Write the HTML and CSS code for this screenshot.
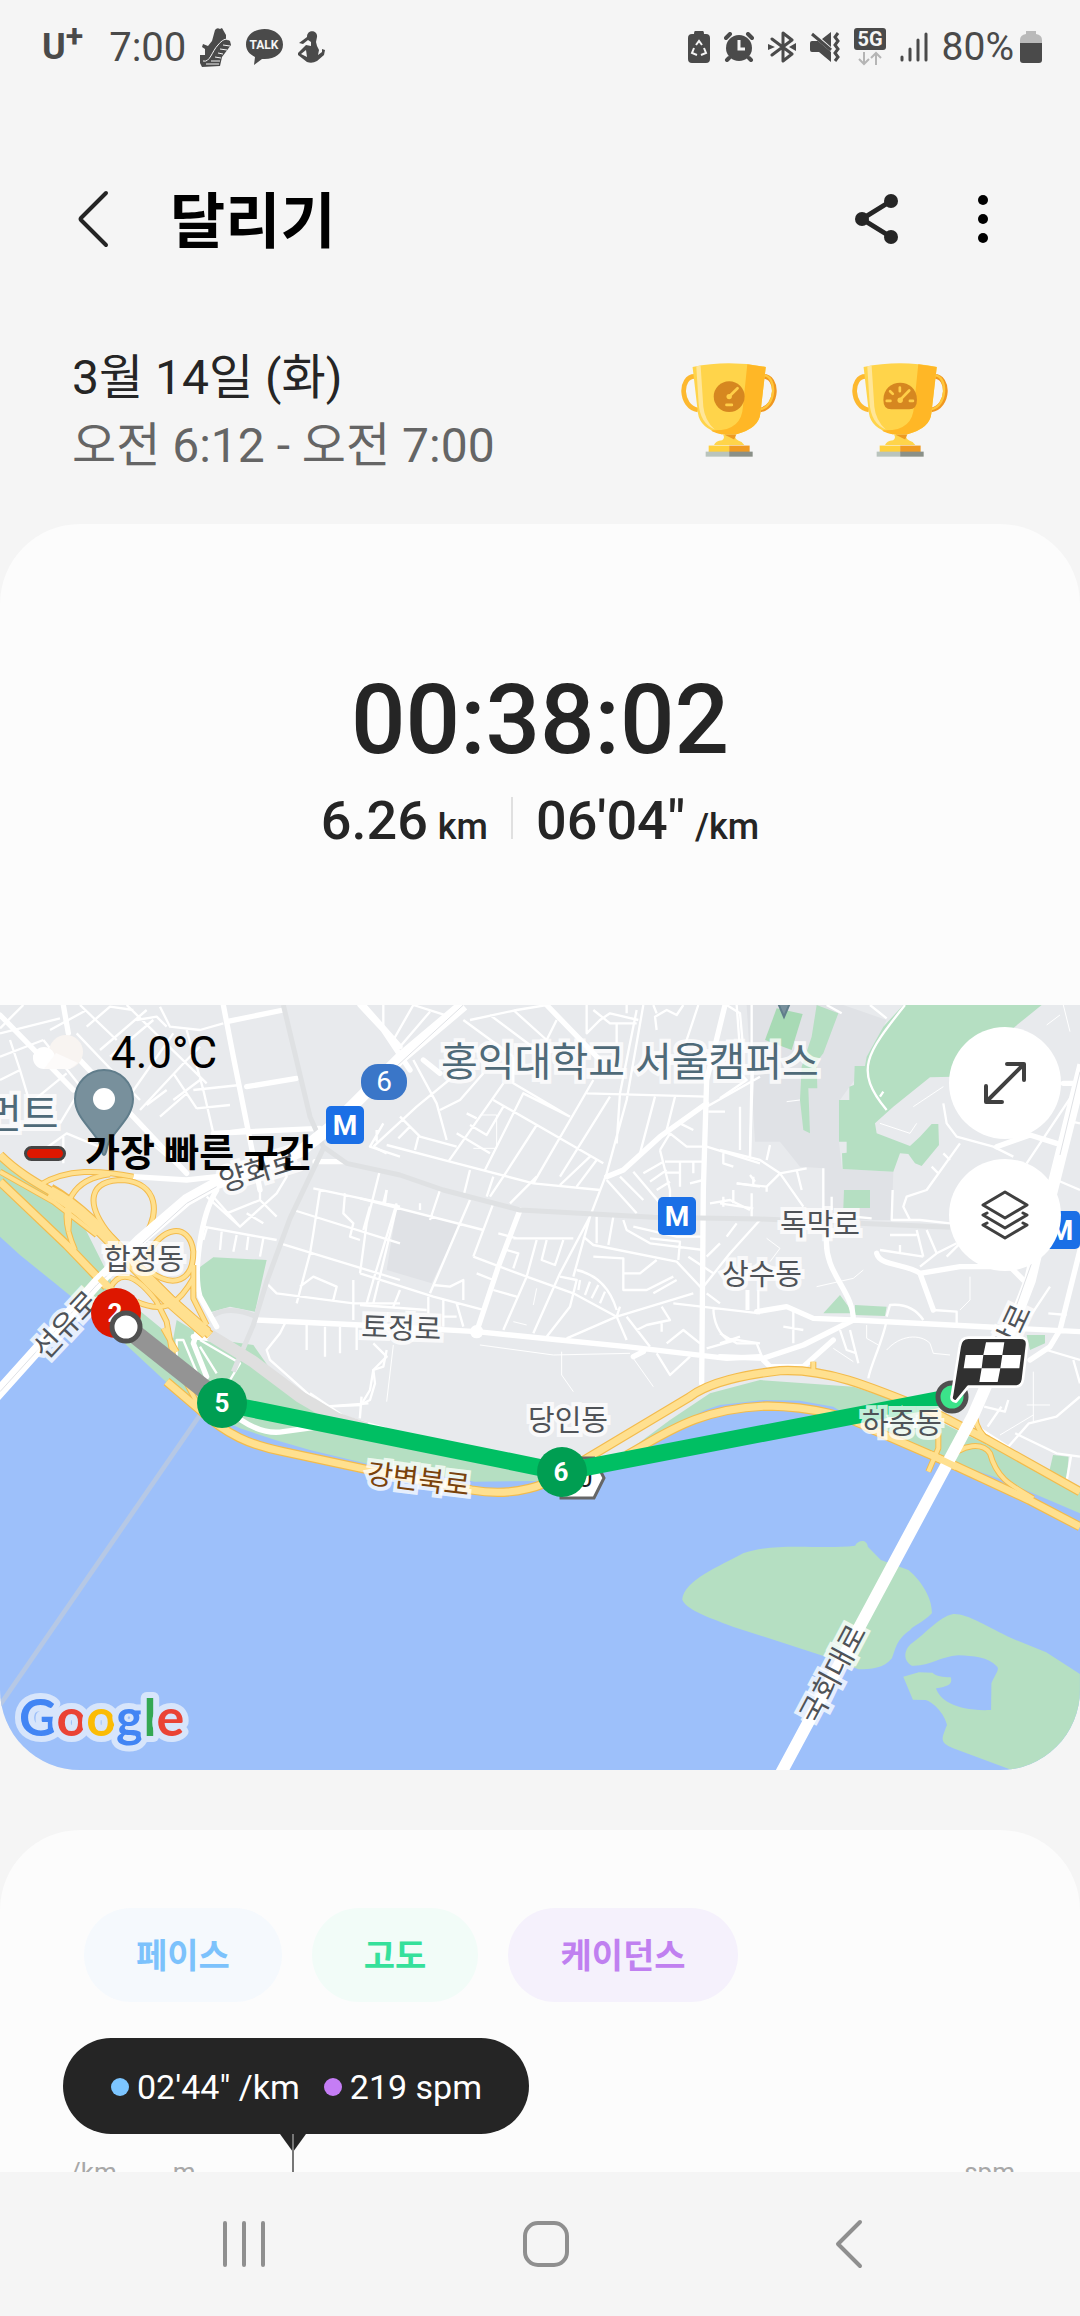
FILE: index.html
```html
<!DOCTYPE html>
<html lang="ko">

<head>
    <meta charset="utf-8">
    <meta name="viewport" content="width=device-width, initial-scale=1">
    <title>달리기</title>
    <link rel="stylesheet" href="styles.css">
</head>
<body>
    <div class="status-bar">
        <div class="status-left">
            <span class="carrier">U<sup>+</sup></span>
            <span class="clock">7:00</span>
            <svg width="32" height="40" viewBox="0 0 32 40">
                <path fill="#4a4a4a" d="M15 3 Q17 0 20 2 L22 1 L26 8 L26 12 L30 14 L31 18 L22 30 L20 39 L2 40 L0 36 L0 28 L5 28 L5 22 L2 20 L3 17 L8 19 L12 14 Z"/>
                <path fill="none" stroke="#f5f5f5" stroke-width="1" d="M3 34 C10 36 12 24 18 18 C22 13 26 11 28 13 M18 26 L23 27 M20 22 L27 23 M23 18 L30 19 M15 30 L21 31 M11 34 L20 34 M6 37 L19 37"/>
            </svg>
            <svg width="37" height="36" viewBox="0 0 37 36">
                <path fill="#4a4a4a" d="M18.500 0 C29 0 37 6.500 37 15.500 C37 25 28 31 16 30 L8 36 L9 28 C3 25 0 21 0 15.500 C0 6.500 8 0 18.500 0 Z"/>
                <text class="talk" x="18" y="20">TALK</text>
            </svg>
            <svg width="28" height="32" viewBox="0 0 28 32">
                <path fill="#4a4a4a" d="M10 6 C10 -2 21 -1 20 6 L19 11 L20 15 L22 19 L21 24 L25 21 L25 18 L28 19 L27 24 L20 30 Q15 33 10 31 L1 24 L1 22 L9 14 L14 15 L14 11 L11 9 L6 13 L2 12 L6 9 Z"/>
                <path fill="#f5f5f5" d="M4 23 L9 19 L10 26 Z"/>
            </svg>
        </div>
        <div class="status-right">
            <svg width="22" height="32" viewBox="0 0 22 32">
                <path fill="#4a4a4a" d="M7 0 H15 Q16 0 16 3 H18 Q22 3 22 7 V28 Q22 32 18 32 H4 Q0 32 0 28 V7 Q0 3 4 3 H6 Q6 0 7 0 Z"/>
                <path fill="none" stroke="#f5f5f5" stroke-width="2" d="M8 14 L11 10 L14 14 M16 17 L18 22 L13 24 M9 24 L4 22 L6 17"/>
            </svg>
            <svg width="30" height="30" viewBox="0 0 30 30">
                <circle cx="15" cy="16" r="13" fill="#4a4a4a"/>
                <path fill="none" stroke="#4a4a4a" stroke-width="4" stroke-linecap="round" d="M2 6 L6 2 M24 2 L28 6 M5 26 L3 28 M25 26 L27 28"/>
                <path fill="none" stroke="#f5f5f5" stroke-width="3" d="M15 8 V17 H21"/>
            </svg>
            <svg width="28" height="32" viewBox="0 0 28 32">
                <path fill="none" stroke="#4a4a4a" stroke-width="3" stroke-linejoin="round" stroke-linecap="round" d="M4 8 L24 23 L15 30 V2 L24 9 L4 24"/>
                <path fill="#4a4a4a" d="M0 13 L7 16 L0 19 Z M28 12 L21 16 L28 20 Z"/>
            </svg>
            <svg width="30" height="30" viewBox="0 0 30 30">
                <path fill="#4a4a4a" d="M2 9 H8 L21 20 V30 L9 20 H2 Q0 20 0 18 V11 Q0 9 2 9 Z M12 7 L21 0 V15 Z"/>
                <path fill="none" stroke="#4a4a4a" stroke-width="3" d="M2 2 L21 18 M28 1 L25 5 L28 9 L25 13 L28 17 L25 21 L28 25 L25 29"/>
            </svg>
            <svg width="32" height="38" viewBox="0 0 32 38">
                <rect width="32" height="22" rx="3" fill="#4a4a4a"/>
                <text class="net" x="16" y="18">5G</text>
                <path fill="none" stroke="#b5b5b5" stroke-width="2" d="M10 24 V36 M5 31 L10 36 L15 31 M22 37 V25 M17 30 L22 25 L27 30"/>
            </svg>
            <svg width="28" height="30" viewBox="0 0 28 30">
                <path fill="none" stroke="#4a4a4a" stroke-width="3" stroke-linecap="round" d="M2 25 V28 M10 17 V28 M18 8 V28 M26 2 V28"/>
            </svg>
            <span class="battery">80%
                <svg width="22" height="32" viewBox="0 0 22 32">
                    <path fill="#bababa" d="M6 0 H16 V3 Q22 4 22 9 V14 H0 V9 Q0 4 6 3 Z"/>
                    <path fill="#4a4a4a" d="M0 12 H22 V29 Q22 32 19 32 H3 Q0 32 0 29 Z"/>
                </svg>
            </span>
        </div>
    </div>

    <header class="app-bar">
        <button type="button" class="icon-btn" aria-label="뒤로">
            <svg width="34" height="60" viewBox="0 0 34 60">
                <path fill="none" stroke="#252525" stroke-width="4" stroke-linecap="round" stroke-linejoin="round" d="M30 4 L5 29 Q4 30 5 31 L30 56"/>
            </svg>
        </button>
        <h1>달리기</h1>
        <button type="button" class="icon-btn" aria-label="공유">
            <svg width="44" height="52" viewBox="0 0 44 52">
                <path fill="none" stroke="#252525" stroke-width="5" d="M37 8 L8 26 L37 44"/>
                <g fill="#252525"><circle cx="37" cy="8" r="7"/><circle cx="8" cy="26" r="7"/><circle cx="37" cy="44" r="7"/></g>
            </svg>
        </button>
        <button type="button" class="icon-btn" aria-label="더보기">
            <svg width="10" height="48" viewBox="0 0 10 48">
                <circle cx="5" cy="5" r="5"/><circle cx="5" cy="24" r="5"/><circle cx="5" cy="43" r="5"/>
            </svg>
        </button>
    </header>

    <main>
        <section class="when">
            <div>
                <p class="date">3월 14일 (화)</p>
                <p class="time-range">오전 6:12 - 오전 7:00</p>
            </div>
            <div class="trophies">
                <svg width="96" height="94" viewBox="0 0 285 280">
                    <defs>
                        <g id="cup">
                            <path fill="none" stroke="#fdb82f" stroke-width="14" d="M40 40 C-5 40 -5 130 50 140"/>
                            <path fill="none" stroke="#f0971f" stroke-width="14" d="M245 40 C290 40 290 130 235 140"/>
                            <path fill="none" stroke="#ffc63a" stroke-width="7" d="M245 37 C286 37 284 130 235 138"/>
                            <path fill="#ffd44a" d="M34 12 Q142 -10 252 12 L236 150 Q232 195 165 212 L120 212 Q56 195 50 150 Z"/>
                            <path fill="#ffb726" d="M197 4 L252 12 L236 150 Q232 195 165 212 L120 212 Q90 205 90 200 Q180 205 184 130 Z"/>
                            <path fill="#ffe698" d="M45 10 L58 8 L66 130 Q70 170 100 198 Q56 180 52 120 Z"/>
                            <path fill="#ffd44a" d="M124 212 H162 Q156 228 180 235 L188 244 H98 Q102 232 122 230 Q132 222 124 212 Z"/>
                            <path fill="#ee9a20" d="M128 213 H164 L158 228 Z"/>
                            <rect x="82" y="246" width="61" height="20" fill="#ffd03c"/>
                            <rect x="143" y="246" width="61" height="20" fill="#ef9a22"/>
                            <rect x="73" y="264" width="70" height="15" fill="#b9c4bd"/>
                            <rect x="143" y="264" width="70" height="15" fill="#8a9088"/>
                        </g>
                    </defs>
                    <use href="#cup"/>
                    <circle cx="143" cy="100" r="46" fill="#d68720"/>
                    <path fill="none" stroke="#ffce48" stroke-width="8" stroke-linecap="round" d="M143 100 L168 75 M135 125 H151"/>
                    <circle cx="143" cy="100" r="8" fill="#ffce48"/>
                </svg>
                <svg width="96" height="94" viewBox="0 0 285 280">
                    <use href="#cup"/>
                    <path fill="#d68720" d="M93 110 C93 42 193 42 193 110 Q193 138 170 138 H116 Q93 138 93 110 Z"/>
                    <path fill="none" stroke="#ffce48" stroke-width="8" stroke-linecap="round" d="M143 110 L170 82 M103 113 H114 M172 113 H181 M142 73 V84 M113 84 L121 92"/>
                    <circle cx="143" cy="111" r="8" fill="#ffce48"/>
                </svg>
            </div>
        </section>

        <section class="card result">
            <div class="numbers">
                <p class="duration">00:38:02</p>
                <div class="totals">
                    <p>6.26<small>km</small></p>
                    <p>06'04"<small>/km</small></p>
                </div>
            </div>

            <div class="map">
                <svg class="map-canvas" viewBox="0 0 1080 765">
                    <!-- ground is drawn on a 3x grid -->
                    <g transform="scale(.33333)">
                        <rect width="3240" height="2295" fill="#e8eaed"/>
                        <path fill="#e0e2e6" d="M2240 0 H2530 L2660 45 2600 175 2520 285 2517 410 2526 492 2680 500 2675 645 2475 645 2470 490 2400 485 2340 410 2265 410 Z M1190 610 L1380 655 1295 835 1160 795 Z"/>
                        <g class="park">
                            <path d="M0 465 L220 600 350 860 520 1000 530 945 620 1000 760 1020 830 1120 960 1210 1115 1260 1620 1370 1720 1440 600 1440 0 800 Z"/>
                            <path d="M1800 1400 L2010 1245 2130 1165 2280 1125 2560 1145 2700 1190 2900 1290 3240 1450 V1600 Z"/>
                            <path d="M595 790 L640 757 800 765 765 920 690 905 620 925 588 860 Z"/>
                            <path d="M2710 0 H3125 L3045 65 2860 215 2790 217 2680 305 2625 355 2630 385 2730 423 2760 395 2795 357 H2815 L2817 420 2765 483 2745 475 2725 447 2700 445 2680 500 2528 492 2526 445 2540 443 V410 H2517 V285 H2548 V245 L2562 240 2564 183 H2595 L2600 155 2650 65 Z"/>
                            <path d="M2532 555 H2610 V609 H2530 Z M2450 0 L2515 25 2470 145 2450 170 2452 250 H2425 L2430 385 2410 375 2400 285 2405 185 2435 95 Z M2470 925 L2520 870 2560 925 Z M2565 900 L2660 905 2655 933 2565 930 Z M3080 990 H3135 V1015 L3090 1035 Z"/>
                            <path fill="#a8dab5" d="M2330 10 L2408 27 2375 135 2295 105 Z"/>
                        </g>
                        <path class="water" d="M0 695 L60 750 165 835 300 945 395 1035 530 1160 600 1215 720 1270 826 1305 930 1335 1095 1375 1425 1430 1620 1428 1700 1410 1878 1345 1980 1285 2115 1215 2160 1200 2290 1185 2400 1187 2500 1205 2581 1255 2839 1365 2994 1420 3240 1525 V2295 H0 Z"/>
                        <g class="park" transform="translate(1620 1185) scale(1.033 1)">
                            <path d="M413 598 C420 540 520 500 590 460 C680 425 820 450 915 437 C925 418 950 418 952 440 L990 480 L1070 510 C1100 535 1140 590 1138 640 C1110 670 1080 680 1075 690 C1035 720 1035 740 1022 775 C1000 805 960 808 925 808 L830 770 L560 680 C480 650 420 625 413 598 Z"/>
                            <path d="M1200 642 C1240 640 1300 680 1370 715 L1470 757 L1568 822 V1110 H1370 L1200 1045 C1160 1025 1165 1020 1182 975 C1175 940 1140 905 1120 900 L1083 899 L1055 830 L1100 817 L1140 818 C1150 830 1170 830 1193 832 C1198 850 1190 858 1150 865 C1160 900 1210 935 1310 930 L1311 850 C1320 825 1335 810 1328 800 C1300 770 1260 768 1215 766 C1160 770 1130 800 1080 797 C1050 780 1060 745 1080 730 C1120 700 1160 650 1200 642 Z"/>
                            <path d="M1490 165 L1535 170 L1530 238 L1480 210 Z"/>
                        </g>
                        <path fill="none" stroke="#b6c8e5" stroke-width="14" d="M600 1230 L0 2100"/>

                        <!-- side streets -->
                        <g class="street">
                            <path transform="translate(0 -45)" d="M0 130 L180 85 M70 45 L0 115 M0 200 L130 150 M230 130 L420 330 M240 45 L350 150 M380 45 L620 280 M260 110 L330 50 L400 60 M150 120 L260 60 M0 270 L60 240 L30 150 M60 240 L90 340 M200 250 L90 340 M130 150 L250 300 M180 400 L240 300 M100 200 L150 180 M190 440 V520 M130 480 L200 430 L320 480 M560 120 L610 300 L640 430 M420 360 L560 210 L600 170 M440 345 L500 300 M480 380 L560 310 M520 330 L600 270 M380 330 L520 130 M590 355 L690 345 M580 300 L720 285 M640 430 L750 415 M480 50 L510 110 L600 120 L670 100 M410 90 L470 80 L500 110 M300 180 L440 60 M330 200 L460 90 M520 250 L590 355 M430 440 L560 550 M620 620 L720 710 L830 610 L860 560 L850 530 M720 710 L640 620 M610 710 L830 750 M680 670 L780 630 L830 680 M740 670 L790 700 M620 715 L610 750 M665 725 L660 780 M710 735 L700 785 M745 740 L740 780 M790 745 L780 800 M780 600 V630 M840 760 L1200 870 M880 660 L1200 760 M960 600 L940 730 L930 790 L890 940 M940 595 L1200 650 M1035 610 L1030 670 L1060 700 L1050 740 L1080 750 M1190 640 L1120 870 L1100 940 M1110 650 L1090 720 M1160 600 L1150 640 M1150 400 L1110 470 L1200 500 M1130 455 V420 M800 880 L830 910 L1060 940 H1200 M900 890 L940 860 L1010 890 L1000 930 M1060 870 V990 M920 990 V1080 M860 990 L840 1030 L800 1080 L810 1110 L900 1190 L1000 1280 M975 1010 V1100 M1020 1010 V1090 M1070 1010 V1080 M1160 1080 L1150 1130 L1120 1140 L1125 1180 L1110 1230 L1080 1245 L980 1250 M530 1100 V1050 L550 1050 L600 1170 M600 1070 L650 1150 M600 1050 L720 1120 L690 1170"/>
                            <path transform="translate(1080 -45)" d="M160 210 L230 340 L260 450 M70 45 V120 M100 150 L160 45 M210 65 L120 170 M160 45 L270 80 M240 360 L300 330 L370 250 M330 90 L470 60 L560 45 M390 75 L530 180 M460 60 L560 150 L590 90 M310 90 L460 200 M40 470 L170 350 L340 210 M40 470 L80 490 M120 380 L180 440 L290 470 M115 445 L150 410 M175 440 L165 480 M80 465 L270 515 L520 580 L720 600 M265 515 L430 280 M400 330 L730 520 M375 540 L490 310 L630 380 M460 200 V280 L630 380 M520 580 L700 270 M450 640 L530 560 M390 620 L430 560 L530 405 M330 405 L380 435 L430 350 M290 430 L390 490 M320 370 L350 385 M600 585 L690 500 M650 590 L710 510 M850 45 L800 330 L740 550 L690 680 L640 860 M830 60 L780 310 L770 460 M680 310 L1040 320 M750 320 L600 560 M885 320 L840 490 M945 320 L920 420 M740 570 L830 670 M780 560 L850 630 M820 545 L900 640 M900 480 L930 600 V640 M850 550 L910 515 M870 575 L920 540 M890 600 L930 575 M915 515 H1030 M920 548 H960 M960 515 V590 M1000 515 V550 M990 580 L1030 570 M930 430 L980 470 L1040 470 L1200 520 M900 480 L930 430 M960 400 L1000 420 M0 625 L370 720 M60 540 L20 700 L0 850 M110 650 L40 940 M240 600 L210 690 M80 600 L75 640 M180 640 V660 M330 630 L300 700 L210 910 M400 640 L340 800 M330 540 L310 620 M400 560 L380 620 M340 800 L500 860 L640 910 L770 980 L780 950 M0 850 L220 920 L370 960 M220 885 L270 890 L310 870 V930 M350 850 L400 870 M400 900 L470 920 M440 780 L475 790 L460 835 M460 745 H640 M560 750 L545 810 L585 825 L610 750 M530 750 L500 860 L430 1020 M690 680 L600 850 L520 1030 M600 860 L650 870 L630 950 L560 1040 M415 730 L470 745 M670 740 L700 765 L950 815 L1030 900 M710 680 V760 M760 680 L745 765 M790 690 L800 720 L870 760 L1030 780 M820 710 L950 740 H1030 M870 745 L960 755 L955 810 M700 800 L790 805 V900 H860 L940 860 M790 850 L840 850 L890 810 M650 840 Q740 860 770 960 M660 870 L655 900 M690 875 L675 915 M715 885 L695 925 M735 905 L720 940 M620 1045 L770 980 L1000 910 M770 980 L800 1050 M800 980 L870 1070 M830 1020 L860 1005 L930 990 L905 950 M905 1000 V1025 M890 1090 L930 1155 L990 1100 M920 1060 L970 1020 L1020 1060 M880 910 L950 870 M1040 910 L1080 940 M940 940 L1200 970 M1030 890 L1110 790 L1200 690 M985 800 L1060 850 M1040 800 L1080 760 M1100 740 L1130 700 M1040 1075 L1130 1050 L1200 1060 M1060 950 Q1060 1020 1110 1055 M0 945 L200 960 M205 920 V970 M250 930 V1010 M290 940 L310 1010 M250 980 H290 M120 900 L100 950 M1140 350 V480 M1180 200 L1170 500 M1045 365 H1095 M680 45 L680 130 L720 90 L750 70 L835 90 M700 60 L750 100 H830 M770 100 V160 M800 45 V70 M890 120 L885 80 L920 60 L950 75 L970 45 M970 180 L1015 45 M880 45 L890 70 M1100 45 L1140 70 L1150 180 M1200 260 L1040 350 M1050 640 L1110 630 L1170 660 M1090 620 V650 M1090 490 V520 L1120 530 M1130 580 L1200 590 M1180 560 V590 M1160 900 V960 M40 1060 L80 1100 L40 1140 L30 1200 L0 1250"/>
                            <path transform="translate(2160 -45)" d="M95 45 V230 L90 500 M50 45 L60 180 M0 480 L120 510 L180 550 L250 650 M150 465 L140 510 M50 580 L140 590 L180 550 L260 535 M230 540 L245 600 M140 590 V605 M90 555 L105 575 M0 640 L100 655 M40 600 V640 M95 610 V680 M310 535 V660 M335 620 V660 M350 675 L455 685 M518 600 L515 690 H600 L690 700 M555 45 C440 190 400 240 500 360 M480 320 L490 305 M720 460 L620 600 L560 620 L550 650 L570 690 M670 340 L680 400 L710 440 L820 470 L880 500 M635 530 L655 550 M670 490 L690 510 M1080 280 L920 520 M450 45 L500 85 M320 45 L365 70 M0 325 L80 270 L60 250 M510 735 H590 M590 720 L610 800 M620 720 L650 790 M600 830 L650 790 L710 760 M480 780 L610 800 M540 765 V790 M85 900 V960 M115 900 V960 M500 990 C490 1050 450 1130 445 1165 M500 980 L510 945 C560 940 590 960 610 990 M640 960 L710 965 V1000 M220 960 V1060 M190 1010 L250 1020 M0 1030 L50 1060 L110 1060 L130 1110 M0 1060 L60 1040 M360 1020 L380 1080 L410 1090 M390 1020 L415 1120 M990 890 L930 980 M985 970 L1040 975 M980 1080 L1080 1110 M1060 1110 L1080 1180 M1080 600 L1010 570 M1080 400 L1055 395 M680 800 L720 760"/>
                            <path transform="translate(1620 1185) scale(1.033 1)" d="M1290 20 L1350 35 L1360 0 M1300 80 L1340 20 M1270 80 L1360 140 L1420 70 L1500 50 L1568 -10 M1380 100 L1500 160 L1568 170 M1542 170 L1530 240"/>
                            <path transform="translate(0 1185) scale(1.033 1)" d="M940 20 L1070 10 M1050 -10 L1045 55 M900 -20 L1000 50 L1120 85"/>
                        </g>
                        <g class="lane">
                            <path d="M1440 1020 L1660 1050 1890 1045 M1685 1040 V1110 L1720 1160 M1900 1060 L1960 1145 M2450 845 L2560 820 2590 795 M2910 815 V885 L2880 915 M2660 1035 C2700 990 2760 985 2790 1015 L2800 1045 2850 1050 M2600 960 V1000 L2635 1020 M2500 1030 L2560 1070 M1440 330 H1490 V430 H1420 M2360 290 L2400 285 M2740 305 L2830 245 M2640 355 L2730 385 2750 355 M3140 60 L3180 30 M3190 0 L3210 80 M3100 1100 V1250 M3080 1200 H3150 M3100 1230 L3000 1290 M2300 700 L2340 730 2310 770 M1610 850 L1600 900 M1540 950 L1580 960 M1180 1020 L1160 1190"/>
                        </g>

                        <!-- main white roads -->
                        <g class="road">
                            <path transform="translate(0 -45)" d="M0 75 L220 300 M190 45 L205 130 M230 200 L560 550 M400 560 L560 570 L650 560 M670 45 L700 200 L740 400 L780 600 M680 95 L850 60 M740 290 L890 265 M640 430 L960 415 M945 515 H1030 M1090 45 L1200 170 M650 600 C600 680 580 850 600 920 L650 1010 M590 1030 L580 1060 L620 1160 M770 990 L1080 1005 L1430 1025 M580 1040 L660 1050 L740 1100"/>
                            <path transform="translate(1080 -45)" d="M0 45 L70 120 L150 240 M190 210 L240 250 M560 45 L720 210 M1095 45 L1040 270 L1030 600 L1025 1180 M480 660 L415 830 L350 1025 M350 1025 L600 1050 L800 1070 L1100 1105 L1200 1100 M820 1100 L850 1085 M1040 340 L900 440 L790 540 L740 560"/>
                            <path transform="translate(2160 -45)" d="M830 470 L930 435 L1010 460 M470 790 C480 830 560 820 600 850 L640 960 M600 850 L720 830 H870 L910 870 M110 965 L200 950 L280 985 L400 990 L1080 1025 M320 740 C310 850 400 900 400 990 M0 1100 L130 1105 L250 1065 L400 990 M130 1110 L150 1130 L250 1130 L340 1050 M1080 780 L1020 1020 L990 1070 L930 1110 M1060 280 L1030 280"/>
                            <path d="M723 1245 Q790 1290 850 1280 L960 1265"/>
                        </g>
                        <circle cx="1430" cy="980" r="20" fill="#fff"/>
                        <g class="tunnel">
                            <path d="M850 0 L930 335 970 425 1040 475 1200 510 1330 555 1560 615 1960 637 2280 642 2850 667"/>
                            <path d="M970 430 L870 640 800 830 760 960 700 1100"/>
                            <path d="M640 930 Q690 900 770 935"/>
                        </g>
                        <path fill="none" stroke="#dfdfdf" stroke-width="36" d="M630 990 L760 1070 900 1175 1010 1240 1100 1270"/>

                        <!-- express way: dark edge first, then the yellow on top of it -->
                        <g class="ramp-edge">
                            <g id="ramps">
                                <path d="M120 540 C200 490 300 495 400 515 M225 735 C160 590 230 520 330 508 M330 690 C250 590 270 525 370 525 C470 535 490 620 420 715 M440 760 C480 660 570 650 580 740 C580 830 520 850 450 800 M330 850 C360 790 410 810 470 890 L500 950 520 1060 600 1210 M410 890 C500 930 540 890 580 820 M580 780 V880 L620 960 M210 600 L205 680 M0 500 L160 590 290 690 M490 970 L530 1040"/>
                                <path d="M2815 1285 V1330 L2785 1400 M2839 1370 C2890 1310 2950 1315 2970 1345 C2990 1420 3030 1440 3100 1480 M2925 1235 Q2930 1280 2970 1310 M2440 1070 V1100"/>
                            </g>
                        </g>
                        <g class="highway-edge">
                            <g id="highways">
                                <path d="M0 450 C80 530 170 560 230 610 C310 670 350 720 410 780 L510 880 630 990"/>
                                <path d="M0 530 L200 720 320 845 M500 1130 L600 1215 C680 1290 750 1320 850 1340 L1085 1390 1415 1455 C1530 1475 1640 1455 1744 1370 L2070 1175 C2130 1130 2230 1110 2340 1097 C2480 1090 2600 1140 2808 1225 L2963 1305 3240 1460"/>
                                <path d="M1880 1350 C1990 1290 2090 1210 2302 1203 C2440 1205 2550 1235 2620 1275 L2839 1370 3087 1485 3240 1565"/>
                            </g>
                            <path stroke-width="40" d="M150 555 C230 600 310 680 400 780 L500 880 620 985"/>
                        </g>
                        <use href="#ramps" class="ramp"/>
                        <use href="#highways" class="highway"/>
                        <path fill="none" stroke="#ffe08f" stroke-width="34" d="M150 560 C230 600 310 680 400 780 L500 880 620 985"/>

                        <!-- bridges -->
                        <g class="bridge">
                            <path d="M-20 1180 L290 835 420 705 560 585 650 535 900 440 1000 360 1200 160 1390 0"/>
                            <path d="M2340 2310 L2920 1230 3040 955 3090 825 3110 740 3200 380 3250 180"/>
                        </g>
                        <path fill="none" stroke="#dfe1e5" stroke-width="3" d="M0 1160 L290 840 560 595 650 545 M1140 230 L1390 0 M3050 900 L3100 760 M3180 450 L3240 200"/>
                        <path fill="none" stroke="#ffe08f" stroke-width="20" d="M2790 1348 L2870 1386 M300 820 L340 860"/>
                    </g>

                    <!-- pins and stations -->
                    <g fill="#78909c" stroke="#607d8b" stroke-width="2">
                        <path d="M104 150 C101 150 102 141 98 135 C88 120 75 110 75 94 A29 29 0 0 1 133 94 C133 110 120 120 110 135 C106 141 107 150 104 150 Z"/>
                        <path d="M778 -2 L784 12 L790 -2 Z"/>
                    </g>
                    <circle cx="104" cy="94" r="11" fill="#fff"/>
                    <rect x="361" y="59" width="46" height="36" rx="17" fill="#3a76c8"/>
                    <text class="line-no" x="384" y="86">6</text>
                    <g class="station">
                        <rect x="326" y="101" width="38" height="38" rx="5"/>
                        <text x="345" y="130">M</text>
                        <rect x="658" y="192" width="38" height="38" rx="5"/>
                        <text x="677" y="221">M</text>
                        <rect x="1042" y="206" width="38" height="38" rx="5"/>
                        <text x="1061" y="235">M</text>
                    </g>

                    <g class="place">
                        <text class="poi" x="-15" y="123">먼트</text>
                        <text class="poi" x="441" y="71">홍익대학교 서울캠퍼스</text>
                        <text transform="translate(223 187) rotate(-17)">양화로</text>
                        <text x="104" y="265">합정동</text>
                        <text transform="translate(46 356) rotate(-47)">선유로</text>
                        <text transform="translate(361 332) rotate(2)">토정로</text>
                        <text x="780" y="230">독막로</text>
                        <text x="722" y="280">상수동</text>
                        <text x="528" y="426">당인동</text>
                    </g>

                    <!-- shield -->
                    <path d="M559 453 H594 L604 473 L594 493 H561 Z" fill="#fff" stroke="#666" stroke-width="3"/>
                    <path d="M559 455 H593 L596 460 H559 Z" fill="#d65f5f"/>
                    <text class="shield" x="578" y="482">0</text>

                    <path d="M126 322 L222 398" stroke="#949494" stroke-width="19"/>
                    <path d="M222 398 L562 467 L952 392" fill="none" stroke="#00bf63" stroke-width="17"/>

                    <g class="place">
                        <text x="862" y="429">하중동</text>
                        <text class="highway-name" transform="translate(366 478) rotate(7)">강변북로</text>
                        <text transform="translate(817 721) rotate(-62)">국회대로</text>
                        <text transform="translate(998 378) rotate(-65)">서강로</text>
                    </g>

                    <g class="marker">
                        <circle cx="116" cy="308" r="25" fill="#dd1700"/>
                        <text x="115" y="317">2</text>
                        <circle cx="222" cy="398" r="25" fill="#009e52"/>
                        <text x="222" y="407">5</text>
                        <circle cx="562" cy="467" r="25" fill="#009e52"/>
                        <text x="561" y="476">6</text>
                    </g>
                    <circle cx="126" cy="322" r="14" fill="#fff" stroke="#505050" stroke-width="5"/>
                    <circle cx="952" cy="392" r="14" fill="#3be38a" stroke="#505050" stroke-width="5"/>
                    <g transform="translate(720 -15) scale(.33333)">
                        <path fill="#303030" stroke="#fff" stroke-width="8" stroke-linejoin="round" d="M745 1043 H900 Q924 1043 921 1066 L909 1168 Q906 1190 884 1190 H745 L708 1235 Q690 1232 696 1215 L719 1070 Q722 1043 745 1043 Z"/>
                        <path fill="#fff" d="M798 1057 H853 L847 1095 H790 Z M737 1095 H790 L785 1135 H731 Z M847 1095 H903 L898 1135 H841 Z M785 1135 H841 L833 1176 H778 Z"/>
                    </g>

                    <text class="google" x="19" y="731"><tspan fill="#4285f4">G</tspan><tspan fill="#ea4335">o</tspan><tspan fill="#fbbc05">o</tspan><tspan fill="#4285f4">g</tspan><tspan fill="#34a853">l</tspan><tspan fill="#ea4335">e</tspan></text>
                </svg>

                <div class="map-info">
                    <p class="weather">
                        <svg width="52" height="36" viewBox="0 0 52 36">
                            <circle cx="34" cy="17" r="17" fill="#f8f4f1"/>
                            <circle cx="12" cy="23" r="11" fill="#fff"/>
                            <path fill="#fdfbfa" d="M12 34 H38 L46 28 L24 18 Z"/>
                        </svg>
                        4.0°C
                    </p>
                    <p class="legend"><i class="pill"></i>가장 빠른 구간</p>
                </div>

                <div class="map-tools">
                    <button type="button" class="round-btn" aria-label="지도 확대">
                        <svg width="46" height="46" viewBox="0 0 46 46">
                            <path fill="none" stroke="#404040" stroke-width="4" stroke-linecap="round" stroke-linejoin="round" d="M5 41 L41 5 M25 4 H42 V20 M4 26 V42 H20"/>
                        </svg>
                    </button>
                    <button type="button" class="round-btn" aria-label="지도 종류">
                        <svg width="50" height="52" viewBox="0 0 50 52">
                            <g fill="none" stroke="#404040" stroke-width="3" stroke-linejoin="round" stroke-linecap="round">
                                <path d="M25 3 L47 16 L25 29 L3 16 Z"/>
                                <path d="M7 24 L3 26 L25 39 L47 26 L43 24"/>
                                <path d="M7 34 L3 36 L25 49 L47 36 L43 34"/>
                            </g>
                        </svg>
                    </button>
                </div>
            </div>
        </section>

        <section class="card chart-card">
            <div class="chips">
                <button type="button" class="chip pace">페이스</button>
                <button type="button" class="chip altitude">고도</button>
                <button type="button" class="chip cadence">케이던스</button>
            </div>
            <div class="chart">
                <div class="tooltip">
                    <span class="dot blue"></span>02'44" /km
                    <span class="dot purple"></span>219 spm
                </div>
                <div class="axis">
                    <span>/km</span>
                    <span>m</span>
                    <span class="axis-right">spm</span>
                </div>
            </div>
        </section>
    </main>

    <nav class="nav-bar">
        <button type="button" aria-label="최근 앱">
            <svg width="42" height="48" viewBox="0 0 42 48">
                <path fill="none" stroke="#8f8f8f" stroke-width="4" stroke-linecap="round" d="M2 3 V45 M21 3 V45 M40 3 V45"/>
            </svg>
        </button>
        <button type="button" aria-label="홈">
            <svg width="48" height="48" viewBox="0 0 48 48">
                <rect x="3" y="3" width="42" height="42" rx="13" fill="none" stroke="#8f8f8f" stroke-width="4"/>
            </svg>
        </button>
        <button type="button" aria-label="뒤로">
            <svg width="28" height="50" viewBox="0 0 28 50">
                <path fill="none" stroke="#8f8f8f" stroke-width="4" stroke-linecap="round" stroke-linejoin="round" d="M25 3 L3 25 L25 47"/>
            </svg>
        </button>
    </nav>
</body>
</html>
```
FILE: styles.css
```css
* 
{
    box-sizing: border-box;
}

body 
{
    margin: 0;
    height: 100vh;
    display: flex;
    flex-direction: column;
    overflow: hidden;
    background-color: #f5f5f5;
    color: #252525;
    font-family: Roboto, 'Noto Sans CJK KR', sans-serif;
}

p, h1 
{
    margin: 0;
}

svg 
{
    display: block;
    flex-shrink: 0;
}

button 
{
    border: none;
    background: none;
    padding: 0;
    font-family: inherit;
    cursor: pointer;
}

/* status bar */
.status-bar 
{
    flex-shrink: 0;
    display: flex;
    justify-content: space-between;
    align-items: center;
    height: 94px;
    padding: 0 38px 0 42px;
    color: #4a4a4a;
    font-size: 40px;
}

.status-left, .status-right 
{
    display: flex;
    align-items: center;
    gap: 14px;
}

.carrier 
{
    display: flex;
    align-items: center;
    font-size: 36px;
    font-weight: 700;
    margin-right: 12px;
}

.carrier sup 
{
    font-size: 32px;
    line-height: 20px;
    align-self: flex-start;
}

.battery 
{
    display: flex;
    align-items: center;
    gap: 6px;
    font-size: 39px;
}

.talk, .net 
{
    fill: #f5f5f5;
    font-weight: 700;
    text-anchor: middle;
}

.talk 
{
    font-size: 12px;
}

.net 
{
    font-size: 20px;
}

/* app bar */
.app-bar 
{
    flex-shrink: 0;
    display: flex;
    align-items: center;
    height: 250px;
    padding: 0 92px 0 76px;
}

.app-bar h1 
{
    flex: 1;
    margin-left: 60px;
    padding-bottom: 6px;
    color: #000;
    font-size: 60px;
    font-weight: 700;
}

.icon-btn + .icon-btn 
{
    margin-left: 80px;
}

main 
{
    flex: 1;
    min-height: 0;
    overflow: hidden;
}

.when 
{
    display: flex;
    justify-content: space-between;
    padding: 0 132px 44px 72px;
    font-size: 48px;
    line-height: 68px;
}

.time-range 
{
    color: #656565;
}

.trophies 
{
    display: flex;
    align-items: center;
    gap: 75px;
    padding-bottom: 4px;
}

.card 
{
    background-color: #fcfcfc;
    border-radius: 80px;
    overflow: hidden;
}

/* result */
.numbers 
{
    display: flex;
    flex-direction: column;
    align-items: center;
    padding: 137px 0 142px;
    font-weight: 500;
}

.duration 
{
    font-size: 96px;
    line-height: 118px;
}

.totals 
{
    display: flex;
    align-items: center;
    font-size: 54px;
    line-height: 84px;
}

.totals p 
{
    display: flex;
    align-items: baseline;
    height: 84px;
}

.totals p + p::before 
{
    content: "";
    width: 2px;
    height: 42px;
    margin: 0 23px;
    background-color: #e0e0e0;
}

.totals small 
{
    margin-left: 10px;
    font-size: 36px;
}

/* map */
.map 
{
    position: relative;
}

.map-canvas 
{
    width: 100%;
    height: auto;
}

.park 
{
    fill: #b5dfc2;
}

.water 
{
    fill: #9dc0fa;
}

.street, .lane, .road, .tunnel, .bridge, .ramp-edge, .ramp, .highway-edge, .highway 
{
    fill: none;
    stroke: #fff;
    stroke-linejoin: round;
}

.street 
{
    stroke-width: 7px;
}

.lane 
{
    stroke-width: 3px;
}

.road 
{
    stroke-width: 16px;
    stroke-linecap: round;
}

.tunnel 
{
    stroke: #dfe1e3;
    stroke-width: 15px;
}

.bridge 
{
    stroke-width: 36px;
}

.ramp-edge, .highway-edge 
{
    stroke: #f3bb4c;
}

.ramp, .highway 
{
    stroke: #ffe08f;
}

.ramp-edge 
{
    stroke-width: 18px;
}

.ramp 
{
    stroke-width: 12px;
}

.highway-edge 
{
    stroke-width: 28px;
}

.highway 
{
    stroke-width: 21px;
}

.place text 
{
    font-size: 29px;
    fill: #4f5358;
    stroke: rgba(255, 255, 255, 0.75);
    stroke-width: 8px;
    paint-order: stroke;
}

.place .poi 
{
    font-size: 40px;
    fill: #4f6a78;
}

.place .highway-name 
{
    font-size: 28px;
    fill: #7a420b;
}

.station 
{
    fill: #1a6fe6;
}

.station text, .line-no 
{
    fill: #fff;
    font-size: 28px;
    text-anchor: middle;
}

.station text, .marker text 
{
    font-weight: 700;
}

.marker text 
{
    fill: #fff;
    font-size: 26px;
    text-anchor: middle;
}

.shield 
{
    font-size: 26px;
    fill: #222;
}

.google 
{
    font-family: Lato, sans-serif;
    font-size: 52px;
    font-weight: 700;
    stroke: #d7e5fb;
    stroke-width: 12px;
    stroke-linejoin: round;
    paint-order: stroke;
}

.map-info 
{
    position: absolute;
    top: 14px;
    left: 24px;
    color: #000;
}

.weather 
{
    display: flex;
    align-items: center;
    gap: 27px;
    padding-left: 8px;
    font-size: 44px;
    line-height: 68px;
}

.legend 
{
    display: flex;
    align-items: center;
    gap: 19px;
    margin-top: 36px;
    font-size: 38px;
    font-weight: 700;
    line-height: 60px;
}

.pill 
{
    width: 42px;
    height: 15px;
    border: 3px solid #444;
    border-radius: 8px;
    background-color: #dd1700;
}

.map-tools 
{
    position: absolute;
    top: 22px;
    right: 19px;
    display: flex;
    flex-direction: column;
    gap: 20px;
}

.round-btn 
{
    display: flex;
    align-items: center;
    justify-content: center;
    width: 112px;
    height: 112px;
    border-radius: 50%;
    background-color: #fff;
}

/* chart */
.chart-card 
{
    margin-top: 60px;
    padding: 78px 63px 0;
    min-height: 480px;
}

.chips 
{
    display: flex;
    gap: 30px;
    padding-left: 21px;
}

.chip 
{
    height: 94px;
    padding: 0 52px 4px;
    border-radius: 47px;
    font-size: 34px;
    font-weight: 700;
}

.pace 
{
    background-color: #f5f9fd;
    color: #7cc2fc;
}

.altitude 
{
    background-color: #f2fcf8;
    color: #36e09b;
}

.cadence 
{
    background-color: #f5f1fc;
    color: #c080f0;
}

.chart 
{
    margin-top: 36px;
}

.tooltip 
{
    position: relative;
    display: inline-flex;
    align-items: center;
    height: 96px;
    padding: 2px 47px 0 48px;
    border-radius: 48px;
    background-color: #252525;
    color: #fff;
    font-size: 34px;
}

/* pointer of the bubble and the chart cursor under it */
.tooltip::before 
{
    content: "";
    position: absolute;
    top: 100%;
    left: 217px;
    border: 13px solid transparent;
    border-top: 18px solid #252525;
    border-bottom: none;
}

.tooltip::after 
{
    content: "";
    position: absolute;
    top: 100%;
    left: 229px;
    width: 2px;
    height: 300px;
    background-color: #777;
}

.dot 
{
    width: 18px;
    height: 18px;
    margin-right: 8px;
    border-radius: 50%;
}

.blue 
{
    background-color: #7cc5ff;
}

.purple 
{
    margin-left: 24px;
    background-color: #c57df5;
}

.axis 
{
    display: flex;
    gap: 56px;
    margin-top: 22px;
    padding: 0 2px 0 7px;
    color: #a8a8a8;
    font-size: 26px;
    line-height: 32px;
}

.axis-right 
{
    margin-left: auto;
}

/* system navigation */
.nav-bar 
{
    flex-shrink: 0;
    display: grid;
    grid-template-columns: repeat(3, 1fr);
    height: 144px;
    padding: 0 80px 0 93px;
    background-color: #f5f5f5;
}

.nav-bar button 
{
    display: flex;
    align-items: center;
    justify-content: center;
}
```
